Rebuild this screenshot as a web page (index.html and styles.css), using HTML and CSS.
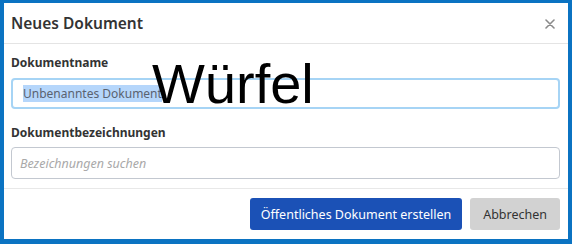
FILE: index.html
```html
<!DOCTYPE html>
<html lang="de">
<head>
    <meta charset="UTF-8">
    <title>Neues Dokument</title>
    <link rel="stylesheet" href="styles.css">
</head>
<body>
    <div class="dialog">
        <div class="dialog-header">
            <h1>Neues Dokument</h1>
            <span class="close">
                <svg width="10" height="10" viewBox="0 0 10 10"><path d="M1 1L9 9M9 1L1 9" stroke="#8a8a8a" stroke-width="1.6" stroke-linecap="round"/></svg>
            </span>
        </div>

        <div class="dialog-body">
            <div class="form-group">
                <label>Dokumentname</label>
                <div class="field field-focus">
                    <span class="selected">Unbenanntes Dokument</span>
                </div>
                <div class="big-label">Würfel</div>
            </div>

            <div class="form-group second">
                <label>Dokumentbezeichnungen</label>
                <div class="field field-tags">
                    <span class="placeholder">Bezeichnungen suchen</span>
                </div>
            </div>
        </div>

        <div class="dialog-footer">
            <button type="button" class="btn btn-primary">Öffentliches Dokument erstellen</button>
            <button type="button" class="btn btn-cancel">Abbrechen</button>
        </div>
    </div>
</body>
</html>
```

FILE: styles.css
```css
body {
    margin: 0;
    background: #0b73c2;
    font-family: 'Noto Sans', sans-serif;
    color: #333;
}

.dialog {
    margin: 3px 4px 0 4px;
    height: 236px;
    background: #fff;
    box-sizing: border-box;
}

.dialog-header {
    height: 41px;
    border-bottom: 1px solid #e4e4e4;
    display: flex;
    align-items: center;
    justify-content: space-between;
    padding: 0 13px 0 7px;
    box-sizing: border-box;
}

h1 {
    margin: 0;
    font-size: 15.5px;
    font-weight: 600;
    color: #333;
}

.close {
    display: flex;
    padding-top: 2px;
}

.dialog-body {
    padding: 11px 8px 9px 7px;
    border-bottom: 1px solid #e8e8e8;
}

.form-group {
    position: relative;
}

.form-group.second {
    margin-top: 16px;
}

label {
    display: block;
    font-size: 12px;
    font-weight: 700;
    line-height: 16px;
    color: #333;
    margin-bottom: 7px;
}

.second label {
    margin-bottom: 6px;
}

.field {
    height: 31px;
    border-radius: 4px;
    box-sizing: border-box;
    display: flex;
    align-items: center;
    font-size: 12.5px;
    overflow: hidden;
    white-space: nowrap;
}

.field-focus {
    border: 2px solid #a6d4f5;
    padding-left: 10px;
}

.field-tags {
    height: 32px;
    border: 1px solid #c3c8d0;
    padding-left: 8px;
}

.selected {
    background: #b5d6fb;
    color: #5a6270;
    font-size: 12px;
    line-height: 17px;
}

.placeholder {
    font-style: italic;
    color: #a9a9a9;
}

.big-label {
    position: absolute;
    left: 141px;
    top: -3px;
    font-family: 'Liberation Sans', Arial, sans-serif;
    font-size: 56px;
    line-height: 64px;
    color: #000;
}

.dialog-footer {
    display: flex;
    justify-content: flex-end;
    gap: 8px;
    padding: 9px 8px 0 0;
}

.btn {
    height: 32px;
    border: none;
    border-radius: 3px;
    font-family: 'Noto Sans', sans-serif;
    font-size: 12.5px;
    padding: 0 11px;
    cursor: pointer;
}

.btn-primary {
    background: #1b51b6;
    color: #fff;
}

.btn-cancel {
    background: #d2d2d2;
    color: #333;
    padding: 0 13px;
}
```
